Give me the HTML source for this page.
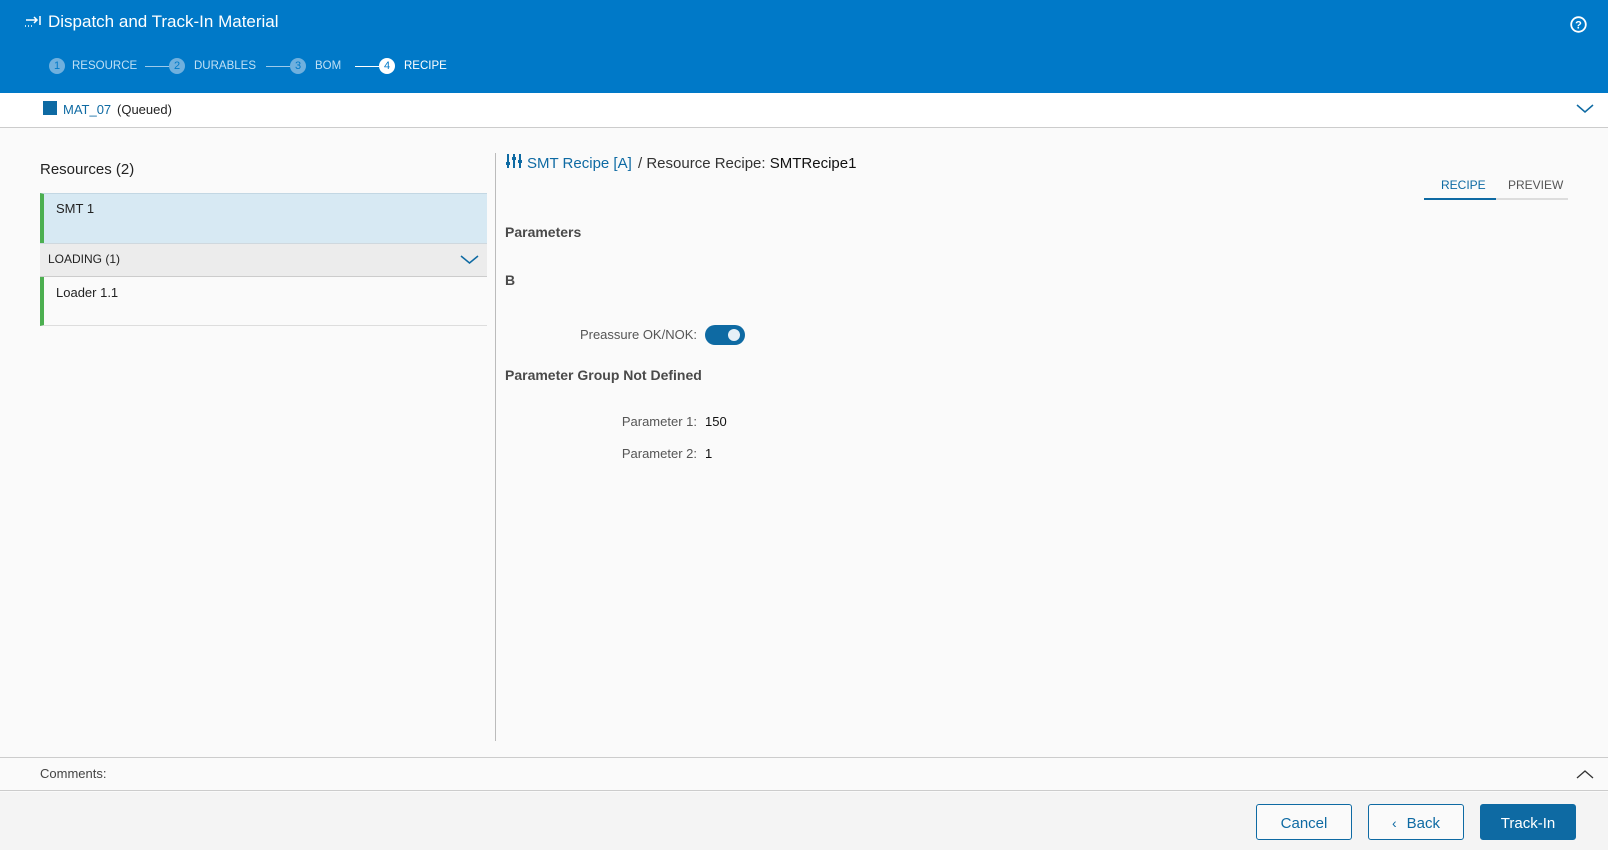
<!DOCTYPE html>
<html><head><meta charset="utf-8"><style>
*{margin:0;padding:0;box-sizing:border-box}
body{width:1608px;height:850px;background:#fafafa;font-family:"Liberation Sans",sans-serif;color:#222;position:relative;overflow:hidden}
.a{position:absolute;white-space:nowrap}
.hdr{left:0;top:0;width:1608px;height:93px;background:#0079c8}
.circ{width:16px;height:16px;border-radius:50%;background:#6fb0de;color:#0079c8;font-size:11px;text-align:center;line-height:16px}
.st{font-size:11.5px;color:#bfe0f5;line-height:16px}
.ln{height:1px;background:#9dcaeb}
.btn{top:804px;width:96px;height:36px;border:1px solid #0e6aa3;border-radius:3px;font-size:15px;color:#0e6aa3;text-align:center;line-height:37px;background:#fafafa}
.h{font-size:14px;font-weight:bold;color:#4a4a4a}
</style></head><body>
<div class="a hdr"></div>
<svg class="a" style="left:24px;top:15px" width="18" height="14" viewBox="0 0 18 14"><path d="M2 5h11M10 2l3 3-3 3M16 1v9" stroke="#fff" stroke-width="1.5" fill="none"/><path d="M1 11h1M4 11h1M7 11h1" stroke="#fff" stroke-width="1.5"/></svg>
<div class="a" style="left:48px;top:12px;font-size:17px;color:#fff">Dispatch and Track-In Material</div>
<svg class="a" style="left:1570px;top:16px" width="17" height="17" viewBox="0 0 17 17"><circle cx="8.5" cy="8.5" r="7.3" stroke="#fff" stroke-width="1.8" fill="none"/><text x="8.5" y="12.5" font-size="11" font-weight="bold" fill="#fff" text-anchor="middle" font-family="Liberation Sans">?</text></svg>
<div class="a circ" style="left:49px;top:58px">1</div><div class="a st" style="left:72px;top:58px">RESOURCE</div>
<div class="a ln" style="left:145px;top:66px;width:25px"></div>
<div class="a circ" style="left:169px;top:58px">2</div><div class="a st" style="left:194px;top:58px">DURABLES</div>
<div class="a ln" style="left:266px;top:66px;width:24px"></div>
<div class="a circ" style="left:290px;top:58px">3</div><div class="a st" style="left:315px;top:58px">BOM</div>
<div class="a" style="left:355px;top:66px;width:24px;height:1px;background:#fff"></div>
<div class="a circ" style="left:379px;top:58px;background:#fff;color:#0079c8">4</div><div class="a st" style="left:404px;top:58px;color:#fff">RECIPE</div>
<div class="a" style="left:0;top:93px;width:1608px;height:35px;background:#fff;border-bottom:1px solid #ccc"></div>
<div class="a" style="left:43px;top:101px;width:14px;height:14px;background:#0e6aa3"></div>
<div class="a" style="left:63px;top:102px;font-size:13px;color:#0e6aa3">MAT_07</div>
<div class="a" style="left:117px;top:102px;font-size:13px;color:#222">(Queued)</div>
<svg class="a" style="left:1576px;top:104px" width="18" height="10"><path d="M1 1l8 7 8-7" stroke="#0e6aa3" stroke-width="1.5" fill="none"/></svg>
<div class="a" style="left:40px;top:161px;font-size:15px">Resources (2)</div>
<div class="a" style="left:40px;top:193px;width:447px;height:50px;background:#d7e9f3;border-top:1px solid #c3d7e3;border-left:4px solid #4caf50"></div>
<div class="a" style="left:56px;top:201px;font-size:13px">SMT 1</div>
<div class="a" style="left:40px;top:243px;width:447px;height:34px;background:#ececec;border-top:1px solid #cfd8de;border-bottom:1px solid #ccc"></div>
<div class="a" style="left:48px;top:252px;font-size:12px">LOADING (1)</div>
<svg class="a" style="left:460px;top:255px" width="19" height="10"><path d="M1 1l8.5 7 8.5-7" stroke="#0e6aa3" stroke-width="1.5" fill="none"/></svg>
<div class="a" style="left:40px;top:277px;width:447px;height:49px;border-left:4px solid #4caf50;border-bottom:1px solid #ddd"></div>
<div class="a" style="left:56px;top:285px;font-size:13px">Loader 1.1</div>
<div class="a" style="left:495px;top:153px;width:1px;height:588px;background:#bbb"></div>
<svg class="a" style="left:506px;top:153px" width="17" height="16" viewBox="0 0 17 16"><g stroke="#0e6aa3" stroke-width="2"><path d="M2 1v14M8 1v14M14 1v14"/></g><g fill="#0e6aa3"><rect x="0" y="9" width="4" height="3"/><rect x="6" y="4" width="4" height="3"/><rect x="12" y="7" width="4" height="3"/></g></svg>
<div class="a" style="left:527px;top:155px;font-size:15px;color:#0e6aa3">SMT Recipe [A]</div>
<div class="a" style="left:638px;top:155px;font-size:15px;color:#333">/ Resource Recipe: <span style="color:#111">SMTRecipe1</span></div>
<div class="a" style="left:1424px;top:198px;width:144px;height:2px;background:#ddd"></div>
<div class="a" style="left:1424px;top:198px;width:72px;height:2px;background:#0e6aa3"></div>
<div class="a" style="left:1441px;top:178px;font-size:12px;color:#0e6aa3">RECIPE</div>
<div class="a" style="left:1508px;top:178px;font-size:12px;color:#555">PREVIEW</div>
<div class="a h" style="left:505px;top:224px">Parameters</div>
<div class="a h" style="left:505px;top:272px">B</div>
<div class="a" style="left:497px;top:327px;width:200px;text-align:right;font-size:13px;color:#555">Preassure OK/NOK:</div>
<div class="a" style="left:705px;top:325px;width:40px;height:20px;border-radius:10px;background:#0e6aa3"></div>
<div class="a" style="left:728px;top:329px;width:12px;height:12px;border-radius:50%;background:#e6f0f7"></div>
<div class="a h" style="left:505px;top:367px">Parameter Group Not Defined</div>
<div class="a" style="left:497px;top:414px;width:200px;text-align:right;font-size:13px;color:#555">Parameter 1:</div>
<div class="a" style="left:705px;top:414px;font-size:13px;color:#111">150</div>
<div class="a" style="left:497px;top:446px;width:200px;text-align:right;font-size:13px;color:#555">Parameter 2:</div>
<div class="a" style="left:705px;top:446px;font-size:13px;color:#111">1</div>
<div class="a" style="left:0;top:757px;width:1608px;height:34px;border-top:1px solid #ccc;border-bottom:1px solid #ccc;background:#fafafa"></div>
<div class="a" style="left:40px;top:766px;font-size:13px;color:#444">Comments:</div>
<svg class="a" style="left:1576px;top:769px" width="18" height="10"><path d="M1 9l8-7 8 7" stroke="#333" stroke-width="1.3" fill="none"/></svg>
<div class="a" style="left:0;top:792px;width:1608px;height:58px;background:#f4f4f4"></div>
<div class="a btn" style="left:1256px">Cancel</div>
<div class="a btn" style="left:1368px"><span style="font-size:14px;margin-right:10px">&#8249;</span>Back</div>
<div class="a btn" style="left:1480px;background:#0e6aa3;color:#fff">Track-In</div>
</body></html>
